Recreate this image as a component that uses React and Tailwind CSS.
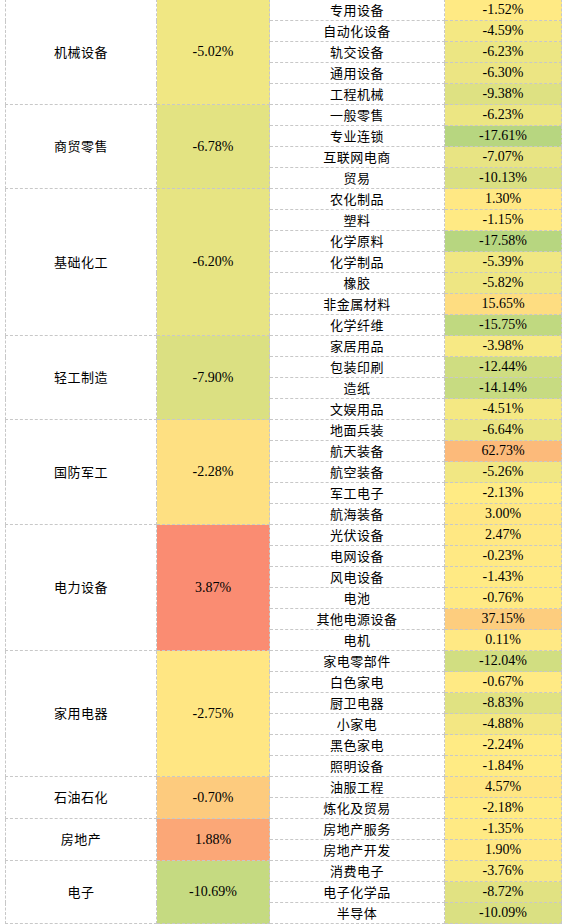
import React from "react";

const groups = [
  { name: "机械设备", val: "-5.02%", bg: "bg-[#F0E783]", items: [
    ["专用设备", "-1.52%", "bg-[#FFEA84]"],
    ["自动化设备", "-4.59%", "bg-[#F4E883]"],
    ["轨交设备", "-6.23%", "bg-[#ECE683]"],
    ["通用设备", "-6.30%", "bg-[#ECE583]"],
    ["工程机械", "-9.38%", "bg-[#DEE182]"],
  ]},
  { name: "商贸零售", val: "-6.78%", bg: "bg-[#E3E382]", items: [
    ["一般零售", "-6.23%", "bg-[#ECE683]"],
    ["专业连锁", "-17.61%", "bg-[#B7D680]"],
    ["互联网电商", "-7.07%", "bg-[#E8E483]"],
    ["贸易", "-10.13%", "bg-[#DAE082]"],
  ]},
  { name: "基础化工", val: "-6.20%", bg: "bg-[#E7E483]", items: [
    ["农化制品", "1.30%", "bg-[#FFE884]"],
    ["塑料", "-1.15%", "bg-[#FFEA84]"],
    ["化学原料", "-17.58%", "bg-[#B7D680]"],
    ["化学制品", "-5.39%", "bg-[#F0E783]"],
    ["橡胶", "-5.82%", "bg-[#EEE683]"],
    ["非金属材料", "15.65%", "bg-[#FEDD81]"],
    ["化学纤维", "-15.75%", "bg-[#C0D980]"],
  ]},
  { name: "轻工制造", val: "-7.90%", bg: "bg-[#DBE082]", items: [
    ["家居用品", "-3.98%", "bg-[#F7E984]"],
    ["包装印刷", "-12.44%", "bg-[#CFDD81]"],
    ["造纸", "-14.14%", "bg-[#C7DB81]"],
    ["文娱用品", "-4.51%", "bg-[#F4E883]"],
  ]},
  { name: "国防军工", val: "-2.28%", bg: "bg-[#FEE082]", items: [
    ["地面兵装", "-6.64%", "bg-[#EAE583]"],
    ["航天装备", "62.73%", "bg-[#FCBA7A]"],
    ["航空装备", "-5.26%", "bg-[#F1E783]"],
    ["军工电子", "-2.13%", "bg-[#FFEB84]"],
    ["航海装备", "3.00%", "bg-[#FFE783]"],
  ]},
  { name: "电力设备", val: "3.87%", bg: "bg-[#FA8C72]", items: [
    ["光伏设备", "2.47%", "bg-[#FFE883]"],
    ["电网设备", "-0.23%", "bg-[#FFE984]"],
    ["风电设备", "-1.43%", "bg-[#FFEA84]"],
    ["电池", "-0.76%", "bg-[#FFEA84]"],
    ["其他电源设备", "37.15%", "bg-[#FDCD7E]"],
    ["电机", "0.11%", "bg-[#FFE984]"],
  ]},
  { name: "家用电器", val: "-2.75%", bg: "bg-[#FFE683]", items: [
    ["家电零部件", "-12.04%", "bg-[#D1DE81]"],
    ["白色家电", "-0.67%", "bg-[#FFEA84]"],
    ["厨卫电器", "-8.83%", "bg-[#E0E282]"],
    ["小家电", "-4.88%", "bg-[#F3E783]"],
    ["黑色家电", "-2.24%", "bg-[#FFEB84]"],
    ["照明设备", "-1.84%", "bg-[#FFEB84]"],
  ]},
  { name: "石油石化", val: "-0.70%", bg: "bg-[#FDCB7E]", items: [
    ["油服工程", "4.57%", "bg-[#FFE683]"],
    ["炼化及贸易", "-2.18%", "bg-[#FFEB84]"],
  ]},
  { name: "房地产", val: "1.88%", bg: "bg-[#FBA777]", items: [
    ["房地产服务", "-1.35%", "bg-[#FFEA84]"],
    ["房地产开发", "1.90%", "bg-[#FFE884]"],
  ]},
  { name: "电子", val: "-10.69%", bg: "bg-[#C5DA81]", items: [
    ["消费电子", "-3.76%", "bg-[#F8E984]"],
    ["电子化学品", "-8.72%", "bg-[#E1E282]"],
    ["半导体", "-10.09%", "bg-[#DAE082]"],
  ]},
];

const cell = "border border-dashed border-[#c8c8c8] p-0 text-center align-middle";
const cjk = "text-[13px] tracking-[0.5px] font-['Liberation_Serif','Noto_Sans_CJK_SC',serif]";
const num = "text-[14px] font-['Liberation_Serif','Noto_Sans_CJK_SC',serif]";

export default function App() {
  return (
    <div className="bg-white w-[567px] h-[924px] overflow-hidden">
      <table className="border-collapse table-fixed ml-[5px] -mt-px w-[556px] text-black leading-none">
        <colgroup>
          <col className="w-[151px]" />
          <col className="w-[113px]" />
          <col className="w-[175px]" />
          <col className="w-[117px]" />
        </colgroup>
        <tbody>
          {groups.map((g) =>
            g.items.map((it, i) => (
              <tr key={g.name + it[0]} className="h-[21px]">
                {i === 0 && (
                  <>
                    <td rowSpan={g.items.length} className={`${cell} ${cjk} bg-white`}>
                      {g.name}
                    </td>
                    <td rowSpan={g.items.length} className={`${cell} ${num} ${g.bg}`}>
                      {g.val}
                    </td>
                  </>
                )}
                <td className={`${cell} ${cjk} bg-white h-[21px]`}>{it[0]}</td>
                <td className={`${cell} ${num} ${it[2]} h-[21px]`}>{it[1]}</td>
              </tr>
            ))
          )}
        </tbody>
      </table>
    </div>
  );
}
